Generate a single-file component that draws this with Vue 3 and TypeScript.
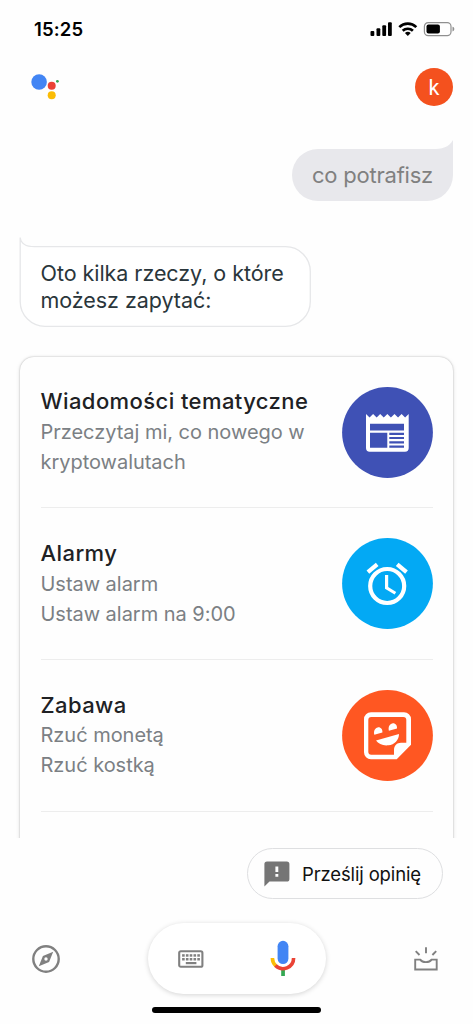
<script setup lang="ts">
interface Topic {
  icon: 'news' | 'alarm' | 'fun'
  title: string
  lines: string[]
}

const topics: Topic[] = [
  { icon: 'news', title: 'Wiadomości tematyczne', lines: ['Przeczytaj mi, co nowego w', 'kryptowalutach'] },
  { icon: 'alarm', title: 'Alarmy', lines: ['Ustaw alarm', 'Ustaw alarm na 9:00'] },
  { icon: 'fun', title: 'Zabawa', lines: ['Rzuć monetą', 'Rzuć kostką'] },
]
const keyColumns = [0, 1, 2, 3, 4]
</script>

<template>
  <div class="screen">
    <div class="status">
      <span class="time">15:25</span>
      <svg class="status-icons" width="86" height="18" viewBox="0 0 86 18">
        <rect x="1.500" y="11" width="3.8" height="5" rx="1" />
        <rect x="7.500" y="8.3" width="3.8" height="7.7" rx="1" />
        <rect x="13.300" y="5.3" width="3.8" height="10.7" rx="1" />
        <rect x="19" y="2.3" width="3.8" height="13.7" rx="1" />
        <g fill="none" stroke="#000" stroke-width="2.7">
          <path d="M30.300 7.1a12.2 12.2 0 0 1 17 0" />
          <path d="M33.700 10.8a7.4 7.4 0 0 1 10.2 0" />
        </g>
        <path d="M35.900 13a4.3 4.3 0 0 1 5.8 0L38.800 15.9z" />
        <rect x="55.400" y="2.6" width="26.6" height="13" rx="3.8" fill="none" stroke="#8f8f8f" stroke-width="1.2" />
        <rect x="57.500" y="4.6" width="13.4" height="9" rx="2" />
        <path d="M83.500 6.8c1.2.3 1.800 1.2 1.800 2.3s-.6 2-1.800 2.3z" fill="#8f8f8f" />
      </svg>
    </div>

    <header class="header">
      <svg class="logo" width="30" height="28" viewBox="0 0 30 28">
        <circle cx="8.1" cy="9" r="7.8" fill="#4285f4" />
        <circle cx="20.7" cy="12.8" r="4" fill="#ea4335" />
        <circle cx="26.4" cy="8.3" r="1.4" fill="#34a853" />
        <circle cx="20.7" cy="22.2" r="4" fill="#fbbc05" />
      </svg>
      <div class="avatar">k</div>
    </header>

    <div class="query">
      <svg class="bubble" width="161" height="61" viewBox="0 0 161 61">
        <path d="M26 9H140C150 9 157 7.500 161 0V35A26 26 0 0 1 135 61H26A26 26 0 0 1 26 9Z" fill="#e8e8ec" />
      </svg>
      <span class="query-text">co potrafisz</span>
    </div>

    <div class="reply">
      <svg class="bubble" width="292" height="91" viewBox="0 0 292 91">
        <path
          d="M1.200 .5C2 7 7 9.700 15.500 9.700H266.500A24.800 24.800 0 0 1 291.300 34.500V64.500A24.800 24.800 0 0 1 266.500 89.300H26A24.800 24.800 0 0 1 1.200 64.500Z"
          fill="#fff" stroke="#e6e7e9" stroke-width="1.3" />
      </svg>
      <p class="reply-text">Oto kilka rzeczy, o które<br />możesz zapytać:</p>
    </div>

    <div class="card-clip">
      <section class="card">
        <article v-for="topic in topics" :key="topic.icon" class="topic">
          <div>
            <h2 class="title">{{ topic.title }}</h2>
            <p v-for="line in topic.lines" :key="line" class="line">{{ line }}</p>
          </div>
          <svg v-if="topic.icon === 'news'" class="disc" viewBox="0 0 91 91">
            <circle cx="45.5" cy="45.5" r="45.4" fill="#3f51b5" />
            <path
              fill="#fff" fill-rule="evenodd"
              d="M24 27l3.550 3.600L31.100 27l3.550 3.600L38.200 27l3.550 3.600L45.350 27l3.550 3.600L52.500 27l3.550 3.600L59.600 27l3.500 3.600L66.700 27V61a3.700 3.700 0 0 1-3.700 3.700H27.700A3.700 3.700 0 0 1 24 61ZM28 36.700V43.500H62V36.700ZM28 45.700V60.700H45.300V45.700ZM47.300 45.700v2.200H62v-2.200ZM47.300 50v2.100H62V50ZM47.300 54.300v2.100H62v-2.100ZM47.300 58.600v2.100H62v-2.100Z" />
          </svg>
          <svg v-else-if="topic.icon === 'alarm'" class="disc" viewBox="0 0 91 91">
            <circle cx="45.5" cy="45.5" r="45.4" fill="#03a9f4" />
            <g fill="none" stroke="#fff" stroke-width="4.2">
              <circle cx="45.2" cy="48" r="17" />
              <path d="M25.900 34.100L35.200 26.400M55.200 26.400L64.500 34.100" />
            </g>
            <path d="M43 37h3.200v12.100l8 4.800-1.600 2.700L43 50.800z" fill="#fff" />
          </svg>
          <svg v-else class="disc" viewBox="0 0 91 91">
            <circle cx="45.5" cy="45.5" r="45.4" fill="#ff5722" />
            <path
              fill="#fff" fill-rule="evenodd"
              d="M29 22.300H62A7 7 0 0 1 69 29.300V54.700L54.700 69.300H29A7 7 0 0 1 22 62.300V29.300A7 7 0 0 1 29 22.300ZM29.300 27A3 3 0 0 0 26.300 30V61.700A3 3 0 0 0 29.300 64.700H52V60C52 55.500 55 52.700 59 52.700H64.300V30A3 3 0 0 0 61.300 27Z" />
            <path
              fill="#fff"
              d="M32.300 44.700C31.300 40.700 33.300 37.900 35.700 37.400C38.700 36.900 40.800 39.500 40.400 42.600ZM46.900 40.700C45.900 36.700 47.900 33.900 50.300 33.400C53.300 32.900 55.400 35.500 55 38.600ZM34 50.500L57 43.900C57 50 52.500 54.500 46.500 55.300C41 56 36.500 54 34 50.500Z" />
          </svg>
        </article>
      </section>
    </div>

    <div class="feedback">
      <svg width="26" height="26" viewBox="0 0 26 26">
        <path
          fill="#757575" fill-rule="evenodd"
          d="M3 .5H22.800A2.600 2.600 0 0 1 25.400 3.100V18A2.600 2.600 0 0 1 22.800 20.600H5.500L.4 25.500V3.100A2.600 2.600 0 0 1 3 .5ZM11.400 5.500V10.900H14.300V5.500ZM11.400 13V15.700H14.300V13Z" />
      </svg>
      <span>Prześlij opinię</span>
    </div>

    <nav class="dock">
      <svg class="compass" width="28" height="28" viewBox="0 0 28 28">
        <circle cx="14" cy="14" r="12.7" fill="none" stroke="#808080" stroke-width="2.4" />
        <path fill="#808080" fill-rule="evenodd" d="M21.200 6.800L17.100 17.100L6.800 21.200L10.900 10.900ZM14 12.300A1.700 1.700 0 1 0 14 15.700A1.700 1.700 0 1 0 14 12.300Z" />
      </svg>
      <div class="input-pill">
        <svg width="26" height="18" viewBox="0 0 26 18">
          <rect x="1.200" y="1.200" width="23.200" height="15.600" rx="1.600" fill="none" stroke="#808080" stroke-width="2.100" />
          <g fill="#808080">
            <template v-for="column in keyColumns" :key="column">
              <rect :x="4.100 + column * 3.800" y="4.200" width="2.600" height="2.500" />
              <rect :x="4.100 + column * 3.800" y="8" width="2.600" height="2.500" />
            </template>
            <rect x="7.800" y="12" width="10.600" height="2.200" />
          </g>
        </svg>
        <svg width="26" height="37" viewBox="0 0 26 37">
          <rect x="7.600" y=".8" width="10.800" height="23.200" rx="5.400" fill="#4285f4" />
          <rect x="11.200" y="29" width="3.700" height="7" fill="#34a853" />
          <g fill="none" stroke-width="3.600">
            <path d="M2.400 18A10.600 10.600 0 0 0 6 26" stroke="#fbbc05" />
            <path d="M5.500 25.500A10.600 10.600 0 0 0 23.600 18" stroke="#ea4335" />
          </g>
        </svg>
      </div>
      <svg class="tray" width="24" height="24" viewBox="0 0 24 24" fill="none" stroke="#808080" stroke-width="1.900">
        <path d="M1.200 12.600H6.200C8.500 15.900 15.300 15.900 17.600 12.600H22.700V22.500H1.200Z" />
        <path d="M12 .3V6.300M1.700 4.100L5.500 8M22.200 4.100L18.400 8" />
      </svg>
    </nav>
    <div class="home-bar"></div>
  </div>
</template>

<style>
body {
  margin: 0;
  background: #fefefe;
}
</style>

<style scoped>
.screen {
  display: flex;
  flex-direction: column;
  width: 473px;
  height: 1024px;
  overflow: hidden;
  background: #fefefe;
  font-family: Inter, "Liberation Sans", sans-serif;
}
h2,
p {
  margin: 0;
}
.status {
  display: flex;
  justify-content: space-between;
  height: 48px;
  padding: 20px 18px 0 34px;
  box-sizing: border-box;
}
.time {
  font-size: 18.500px;
  font-weight: 600;
  line-height: 18px;
  letter-spacing: 0.150px;
  color: #000;
}
.header {
  display: flex;
  justify-content: space-between;
  height: 92px;
  padding: 20px 20px 0 31px;
  box-sizing: border-box;
}
.logo {
  margin-top: 5px;
}
.avatar {
  width: 38px;
  height: 38px;
  border-radius: 50%;
  background: #f4511e;
  color: #fff;
  font: 400 21.5px/39px Roboto, sans-serif;
  text-align: center;
}
.query {
  position: relative;
  align-self: flex-end;
  width: 161px;
  height: 61px;
  margin-right: 20px;
}
.bubble {
  position: absolute;
  inset: 0;
}
.query-text {
  position: relative;
  display: block;
  padding: 20px 0 0 20px;
  font-size: 22px;
  line-height: 30px;
  letter-spacing: -0.220px;
  white-space: nowrap;
  color: #808080;
}
.reply {
  position: relative;
  width: 292px;
  height: 91px;
  margin: 36px 0 0 19px;
}
.reply-text {
  position: relative;
  padding: 22.500px 0 0 21.500px;
  font-size: 21.500px;
  line-height: 27px;
  letter-spacing: -0.050px;
  white-space: nowrap;
  color: #2a363b;
}
.card-clip {
  height: 492px;
  margin-top: 18px;
  padding: 10.500px 20px 0;
  box-sizing: border-box;
  overflow: hidden;
}
.card {
  height: 520px;
  padding: 0 20.500px;
  border-radius: 14px;
  background: #fefefe;
  box-shadow: 0 0.500px 2px rgba(0, 0, 0, 0.28), 0 1px 5px rgba(0, 0, 0, 0.1);
}
.topic {
  display: flex;
  justify-content: space-between;
  height: 151.750px;
  padding-top: 29.800px;
  box-sizing: border-box;
  border-bottom: 1px solid #ededed;
}
.title {
  margin-bottom: 0.600px;
  font-size: 22px;
  font-weight: 500;
  line-height: 30px;
  letter-spacing: 0.420px;
  white-space: nowrap;
  color: #202124;
}
.line {
  font-size: 20px;
  line-height: 30px;
  letter-spacing: -0.030px;
  white-space: nowrap;
  color: #7b8084;
}
.disc {
  flex: none;
  width: 91px;
  height: 91px;
  margin-top: 0.400px;
}
.feedback {
  display: flex;
  align-items: center;
  gap: 12px;
  align-self: flex-end;
  width: 196px;
  height: 51px;
  margin: 10px 30px 0 0;
  padding-left: 16px;
  box-sizing: border-box;
  border: 1.400px solid #dedfe1;
  border-radius: 26px;
  font-size: 18.500px;
  letter-spacing: -0.140px;
  white-space: nowrap;
  color: #111;
}
.dock {
  display: flex;
  justify-content: space-between;
  align-items: center;
  height: 71px;
  margin-top: 24.300px;
  padding: 0 35px 0 32px;
}
.input-pill {
  display: flex;
  justify-content: space-between;
  align-items: center;
  width: 178px;
  height: 71px;
  padding: 0 30px;
  box-sizing: border-box;
  border-radius: 36px;
  background: #fff;
  box-shadow: 0 1px 5px rgba(0, 0, 0, 0.17);
}
.home-bar {
  width: 169px;
  height: 6.500px;
  margin: 12.700px auto 0;
  border-radius: 4px;
  background: #000;
}
</style>
